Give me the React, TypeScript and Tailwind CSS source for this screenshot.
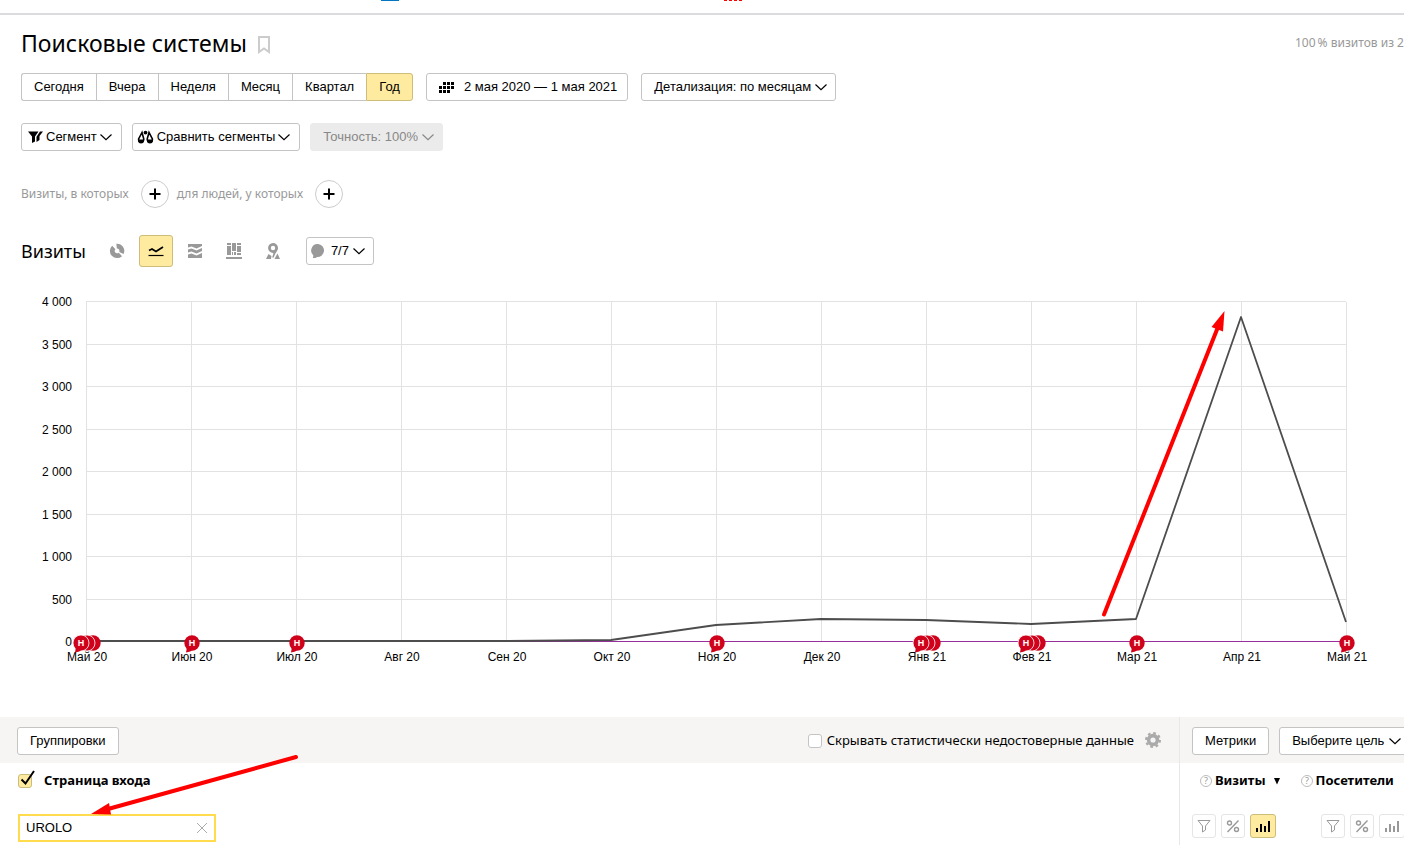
import { useState } from 'react'
import type { ReactNode } from 'react'
import clsx from 'clsx'

const PERIODS = ['Сегодня', 'Вчера', 'Неделя', 'Месяц', 'Квартал', 'Год']

// Monthly visits; notes = number of site notes pinned to that month
const MONTHS = [
  { label: 'Май 20', visits: 8, notes: 3 },
  { label: 'Июн 20', visits: 8, notes: 1 },
  { label: 'Июл 20', visits: 6, notes: 1 },
  { label: 'Авг 20', visits: 6, notes: 0 },
  { label: 'Сен 20', visits: 10, notes: 0 },
  { label: 'Окт 20', visits: 28, notes: 0 },
  { label: 'Ноя 20', visits: 202, notes: 1 },
  { label: 'Дек 20', visits: 270, notes: 0 },
  { label: 'Янв 21', visits: 254, notes: 3 },
  { label: 'Фев 21', visits: 210, notes: 3 },
  { label: 'Мар 21', visits: 265, notes: 1 },
  { label: 'Апр 21', visits: 3820, notes: 0 },
  { label: 'Май 21', visits: 240, notes: 1 },
]

const TICKS = [0, 500, 1000, 1500, 2000, 2500, 3000, 3500, 4000]

const CHART_LEFT = 86
const CHART_TOP = 35
const STEP = 105
const PLOT_HEIGHT = 340

const xAt = (i: number) => CHART_LEFT + i * STEP
const yAt = (v: number) => Math.round(CHART_TOP + PLOT_HEIGHT * (1 - v / 4000))
const formatTick = (v: number) => (v >= 1000 ? `${v / 1000 | 0} ${String(v % 1000).padStart(3, '0')}` : String(v))

function Chevron({ className }: { className?: string }) {
  return (
    <svg className={clsx('w-3 h-3 shrink-0', className)} viewBox="0 0 12 12" fill="none" stroke="currentColor" strokeWidth="1.2">
      <path d="M0.5 3.5 L6 8.7 L11.5 3.5" />
    </svg>
  )
}

function DropSelect({ label, options, disabled }: { label: string; options: string[]; disabled?: boolean }) {
  return (
    <div className={clsx('relative shrink-0', disabled ? 'text-[#888]' : 'text-black')}>
      <select
        aria-label={label}
        disabled={disabled}
        className={clsx(
          'h-7 appearance-none rounded-[3px] border pl-3 pr-6 text-[13px] outline-none',
          disabled ? 'border-[#ebebeb] bg-[#ebebeb] opacity-100' : 'border-[#c4c4c4] bg-white'
        )}
      >
        {options.map((o) => <option key={o}>{o}</option>)}
      </select>
      <Chevron className="pointer-events-none absolute right-[9px] top-2" />
    </div>
  )
}

function Button({ children, className }: { children: ReactNode; className?: string }) {
  return (
    <button className={clsx('flex h-7 shrink-0 items-center whitespace-nowrap rounded-[3px] border border-[#c4c4c4] bg-white text-[13px]', className)}>
      {children}
    </button>
  )
}

function PlusButton({ label }: { label: string }) {
  return (
    <button aria-label={label} className="flex h-7 w-7 items-center justify-center rounded-full border border-[#ccc] bg-white">
      <svg className="h-3 w-3" viewBox="0 0 12 12" stroke="#000" strokeWidth="2">
        <path d="M6 0.5V11.5M0.5 6H11.5" />
      </svg>
    </button>
  )
}

function ChartTypes() {
  return (
    <div className="flex items-center gap-[5px]">
      <button aria-label="Круговая диаграмма" className="flex h-8 w-[34px] items-center justify-center">
        <svg className="h-4 w-4" viewBox="0 0 16 16" fill="none" stroke="#999" strokeWidth="4.8">
          <path d="M7.6 3.2 A4.8 4.8 0 0 1 12.4 10" />
          <path d="M11.4 11.4 A4.8 4.8 0 1 1 4.8 4.4" />
        </svg>
      </button>
      <button aria-label="Линии" className="flex h-8 w-[34px] items-center justify-center rounded-[3px] border border-[#ccbd7a] bg-[#ffeba0]">
        <svg className="h-4 w-4" viewBox="0 0 16 16" fill="none" stroke="#000">
          <path d="M1 7.5 L4 6 L8 8.5 L15 4" strokeWidth="1.8" />
          <path d="M0.5 12.5H15.5" strokeWidth="1.2" />
        </svg>
      </button>
      <button aria-label="Области" className="flex h-8 w-[34px] items-center justify-center">
        <svg className="h-4 w-4" viewBox="0 0 16 16" fill="#999">
          <path d="M1 1H15V3L9.5 5.5L4.5 3.5L1 4.5Z" />
          <path d="M1 6.5L4.5 5.5L9.5 7.5L15 5V8L9.5 10.5L4.5 8.5L1 9.5Z" />
          <path d="M1 11.5L4.5 10.5L9.5 12.5L15 10V15H1Z" />
        </svg>
      </button>
      <button aria-label="Колонки" className="flex h-8 w-[34px] items-center justify-center">
        <svg className="h-4 w-4" viewBox="0 0 16 16" fill="#999" shapeRendering="crispEdges">
          <path d="M1 0H5V2H1ZM1 3H5V12H1ZM6 0H10V8H6ZM6 9H7V12H6ZM8 9H10V12H8ZM11 0H15V2H11ZM11 3H15V9H11ZM11 10H15V12H11ZM0 14H16V15.5H0Z" />
        </svg>
      </button>
      <button aria-label="Карта" className="flex h-8 w-[34px] items-center justify-center">
        <svg className="h-4 w-4" viewBox="0 0 16 16" fill="#999">
          <path fillRule="evenodd" d="M8 0A5 5 0 0 1 13 5C13 8 10.5 9 8.8 14.5H7.2C8 11.5 8.6 10.2 8.2 10A5 5 0 0 1 8 0ZM8 2.8A2.2 2.2 0 1 0 8 7.2A2.2 2.2 0 1 0 8 2.8Z" />
          <path d="M3.5 11L6.5 13L6 16H1ZM12.5 10.5L15 16H9.5Z" />
        </svg>
      </button>
    </div>
  )
}

function NoteMarker({ x, count }: { x: number; count: number }) {
  const first = count > 1 ? x - 5 : x + 1
  const y = CHART_TOP + PLOT_HEIGHT + 1
  return (
    <g>
      {Array.from({ length: count }, (_, i) => count - 1 - i).map((i) => (
        <circle key={i} cx={first + i * 6} cy={y} r={i === count - 1 ? 7.7 : 8} fill="#d0021b" stroke={i === count - 1 ? 'none' : '#fff'} strokeWidth="0.8" />
      ))}
      <path d={`M${first - 5} ${y + 4} L${first - 6} ${y + 9.5} Q${first - 1} ${y + 9} ${first + 1} ${y + 6}Z`} fill="#d0021b" />
      <text x={first} y={y + 3} textAnchor="middle" fontSize="9" fontWeight="700" fill="#fff">H</text>
    </g>
  )
}

function VisitsChart() {
  const bottom = CHART_TOP + PLOT_HEIGHT
  const right = xAt(MONTHS.length - 1)
  const line = MONTHS.map((m, i) => `${xAt(i)},${yAt(m.visits)}`).join(' ')

  return (
    <svg className="block w-full" viewBox="0 0 1404 450" role="img" aria-label="Визиты по месяцам">
      <g stroke="#e2e2e2" shapeRendering="crispEdges">
        {TICKS.map((t) => <path key={t} d={`M${CHART_LEFT} ${yAt(t) - 0.5}H${right}`} />)}
        {MONTHS.map((m, i) => <path key={m.label} d={`M${xAt(i) + 0.5} ${CHART_TOP}V${bottom}`} />)}
      </g>
      <g fontSize="12" textAnchor="end">
        {TICKS.map((t) => <text key={t} x="72" y={yAt(t) + 4}>{formatTick(t)}</text>)}
      </g>
      <path d={`M${CHART_LEFT} ${bottom - 0.5}H${right}`} stroke="#97309b" />
      <polyline points={line} fill="none" stroke="#4d4d4d" strokeWidth="1.8" strokeLinejoin="round" />
      <g fontSize="12" textAnchor="middle">
        {MONTHS.map((m, i) => <text key={m.label} x={xAt(i) + 1} y={bottom + 19}>{m.label}</text>)}
      </g>
      {MONTHS.map((m, i) => m.notes > 0 && <NoteMarker key={m.label} x={xAt(i)} count={m.notes} />)}
      {/* growth arrow */}
      <path d="M1104 347.5 L1218 60" stroke="#f00" strokeWidth="4" strokeLinecap="round" />
      <path d="M1224.5 44 L1223 64.5 L1211.5 60Z" fill="#f00" />
    </svg>
  )
}

function MetricTools({ last }: { last?: boolean }) {
  const box = 'flex h-6 shrink-0 items-center justify-center rounded-[3px] border'
  return (
    <div className="flex gap-[5px]">
      <button aria-label="Фильтр" className={clsx(box, 'w-6 border-[#e5e5e5]')}>
        <svg className="h-3.5 w-3.5" viewBox="0 0 14 14" fill="none" stroke="#999">
          <path d="M1 1.5H13L8.5 7V11L5.5 13V7Z" />
        </svg>
      </button>
      <button aria-label="Проценты" className={clsx(box, 'w-6 border-[#e5e5e5]')}>
        <svg className="h-3.5 w-3.5" viewBox="0 0 14 14" fill="none" stroke="#999" strokeWidth="1.4">
          <circle cx="3.5" cy="4" r="2" />
          <circle cx="10.5" cy="10.5" r="2" />
          <path d="M12.5 1.5L1.5 13" />
        </svg>
      </button>
      <button aria-label="График" className={clsx(box, 'w-[26px]', last ? 'border-[#e5e5e5] text-[#999]' : 'border-[#ccbd7a] bg-[#ffeba0] text-black')}>
        <svg className="h-3.5 w-3.5" viewBox="0 0 14 14" fill="currentColor" shapeRendering="crispEdges">
          <path d="M0 9H2V13H0ZM4 5H6V13H4ZM8 7H10V13H8ZM12 2H14V13H12Z" />
        </svg>
      </button>
    </div>
  )
}

function Hint() {
  return (
    <svg className="h-3 w-3 shrink-0" viewBox="0 0 12 12" fill="none">
      <circle cx="6" cy="6" r="5.5" stroke="#bbb" />
      <text x="6" y="9" textAnchor="middle" fontSize="9" fontWeight="400" fill="#999">?</text>
    </svg>
  )
}

export default function App() {
  const [period, setPeriod] = useState('Год')
  const [search, setSearch] = useState('UROLO')

  return (
    <div className="overflow-hidden bg-white font-['Liberation_Sans',Arial,sans-serif] text-[13px] text-black">
      <header className="flex h-[15px] items-start border-b-2 border-[#dadadf] pl-[381px]">
        <span className="h-px w-[18px] bg-[#0077c0]" />
        <span className="ml-[325px] h-px w-[18px] border-t border-dashed border-[#f00]" />
      </header>

      <div className="px-[21px] pt-3">
        <div className="flex h-8 items-center">
          <h1 className="font-['Noto_Sans',sans-serif] text-[23px] leading-8">Поисковые системы</h1>
          <button aria-label="В избранное" className="ml-2.5 mt-1">
            <svg className="h-[18px] w-[14px]" viewBox="0 0 14 18" fill="none" stroke="#ccc" strokeWidth="2">
              <path d="M2 1H12V16L7 12.5L2 16Z" />
            </svg>
          </button>
          <div className="ml-auto w-[88px] whitespace-nowrap font-['Noto_Sans',sans-serif] text-[12px] text-[#999]">100{'\u2009'}% визитов из 2</div>
        </div>

        <div className="mt-3.5 flex gap-[13px]">
          <div className="flex">
            {PERIODS.map((p) => (
              <button
                key={p}
                onClick={() => setPeriod(p)}
                className={clsx(
                  'h-7 border-y border-l px-3 first:rounded-l-[3px] last:rounded-r-[3px] last:border-r',
                  p === period ? 'border-[#ccbd7a] bg-[#ffeba0]' : 'border-[#c4c4c4] bg-white'
                )}
              >
                {p}
              </button>
            ))}
          </div>
          <Button className="gap-2.5 pl-3 pr-2.5">
            <svg className="h-[11px] w-[15px]" viewBox="0 0 15 11" fill="#000" shapeRendering="crispEdges">
              <path d="M4 0h3v3h-3zM8 0h3v3h-3zM12 0h3v3h-3zM0 4h3v3h-3zM4 4h3v3h-3zM8 4h3v3h-3zM12 4h3v3h-3zM0 8h3v3h-3zM4 8h3v3h-3zM8 8h3v3h-3z" />
            </svg>
            2 мая 2020 — 1 мая 2021
          </Button>
          <DropSelect label="Детализация" options={['Детализация: по месяцам', 'Детализация: по дням']} />
        </div>

        <div className="mt-[22px] flex gap-2.5">
          <Button className="gap-[3px] pl-1.5 pr-[9px]">
            <svg className="h-3.5 w-[15px]" viewBox="0 0 15 14" fill="#000">
              <path d="M0 1.5H10.5L7 6.5V11.5L4 13V6.5Z" />
              <path d="M12 1.5H15L11.5 6V10L8.5 12V6.8Z" />
            </svg>
            Сегмент
            <Chevron />
          </Button>
          <Button className="gap-[3px] pl-1 pr-[9px]">
            <svg className="h-3.5 w-[17px]" viewBox="0 0 17 14" fill="none" stroke="#000" strokeWidth="1.6">
              <path d="M5 2.5L1.6 9Q1.5 12.5 4 12.5Q6.5 12.5 6.8 9ZM12 2.5L10.2 9Q10.5 12.5 13 12.5Q15.5 12.5 15.4 9Z" />
              <path d="M1 9.4H7.2Q7 13.3 4 13.3T1 9.4ZM9.8 9.4H16Q16 13.3 13 13.3T9.8 9.4Z" fill="#000" stroke="none" />
              <circle cx="8.5" cy="2.6" r="1.9" fill="#000" stroke="none" />
            </svg>
            Сравнить сегменты
            <Chevron />
          </Button>
          <DropSelect label="Точность" options={['Точность: 100%']} disabled />
        </div>

        <div className="mt-[29px] flex items-center font-['Noto_Sans',sans-serif] text-[12px] text-[#999]">
          <span className="mr-3">Визиты, в которых</span>
          <PlusButton label="Добавить условие на визиты" />
          <span className="ml-2 mr-3">для людей, у которых</span>
          <PlusButton label="Добавить условие на людей" />
        </div>

        <div className="mt-[27px] flex items-center">
          <h2 className="mr-3.5 font-['Noto_Sans',sans-serif] text-[18px] leading-6">Визиты</h2>
          <ChartTypes />
          <Button className="ml-4 gap-1 pl-1 pr-2">
            <svg className="h-3.5 w-3.5" viewBox="0 0 14 14" fill="#999">
              <path d="M7 0A6.5 6.5 0 1 1 6 13Q4.5 14.5 1.5 14.5Q2.5 13 2.2 11.2A6.5 6.5 0 0 1 7 0Z" />
            </svg>
            <span className="ml-0.5">7/7</span>
            <Chevron />
          </Button>
        </div>
      </div>

      <VisitsChart />

      <div className="relative flex">
        <section className="min-w-0 flex-1">
          <div className="flex h-[46px] items-center bg-[#f6f5f3] pl-[17px] pr-[18px]">
            <Button className="mt-0.5 px-3">Группировки</Button>
            <label className="ml-auto mt-0.5 flex items-center gap-[5px] font-['Noto_Sans',sans-serif]">
              <input type="checkbox" className="h-3.5 w-3.5 appearance-none rounded-[3px] border border-[#c4c4c4] bg-white" />
              Скрывать статистически недостоверные данные
            </label>
            <button aria-label="Настройки" className="ml-[11px]">
              <svg className="h-4 w-4" viewBox="0 0 16 16" fill="none" stroke="#aaa">
                <circle cx="8" cy="8" r="4.4" strokeWidth="3.6" />
                <circle cx="8" cy="8" r="7" strokeWidth="2" strokeDasharray="2.75 2.75" />
              </svg>
            </button>
          </div>
          <div className="px-[18px] pt-1.5">
            <div className="flex h-6 items-center gap-2.5">
              <span className="relative flex">
                <input id="landing" type="checkbox" defaultChecked className="h-3.5 w-3.5 appearance-none rounded-[3px] border border-[#ccbd7a] bg-[#ffeba0]" />
                <svg className="pointer-events-none absolute bottom-0 left-0 h-[18px] w-[18px]" viewBox="0 0 18 18" fill="none" stroke="#000" strokeWidth="2">
                  <path d="M3.5 9.5L7.5 13.5L16 1" />
                </svg>
              </span>
              <label htmlFor="landing" className="ml-0.5 font-['Noto_Sans',sans-serif] font-bold">Страница входа</label>
            </div>
            <div className="mt-[21px] flex h-7 w-[198px] items-center border-2 border-[#ffdb4d] px-1.5">
              <input aria-label="Поиск страницы" value={search} onChange={(e) => setSearch(e.target.value)} className="min-w-0 flex-1 outline-none" />
              <button aria-label="Очистить" onClick={() => setSearch('')}>
                <svg className="h-3 w-3" viewBox="0 0 12 12" stroke="#aaa">
                  <path d="M1 1L11 11M11 1L1 11" />
                </svg>
              </button>
            </div>
          </div>
        </section>

        <section className="w-[225px] overflow-hidden border-l border-[#e8e8e8] pb-2">
          <div className="flex h-[46px] items-center gap-2.5 bg-[#f6f5f3] pl-3 pt-0.5">
            <Button className="px-3">Метрики</Button>
            <DropSelect label="Цель" options={['Выберите цель']} />
          </div>
          <div className="mt-1.5 flex h-6 items-center pl-5 font-['Noto_Sans',sans-serif] font-bold">
            <button className="flex items-center gap-[3px]">
              <Hint />
              Визиты
              <svg className="ml-1 h-2 w-2" viewBox="0 0 8 8"><path d="M1 1H7L4 7.5Z" /></svg>
            </button>
            <button className="ml-5 flex items-center gap-[3px]">
              <Hint />
              Посетители
            </button>
          </div>
          <div className="mt-[21px] flex gap-[45px] pl-3">
            <MetricTools />
            <MetricTools last />
          </div>
        </section>

        {/* arrow pointing at the page filter */}
        <svg className="pointer-events-none absolute left-[90px] top-9 h-[62px] w-[210px]" viewBox="0 0 210 62">
          <path d="M206 4L18 56" stroke="#f00" strokeWidth="4" strokeLinecap="round" />
          <path d="M1 61L19 50L21 61.5Z" fill="#f00" />
        </svg>
      </div>
    </div>
  )
}
